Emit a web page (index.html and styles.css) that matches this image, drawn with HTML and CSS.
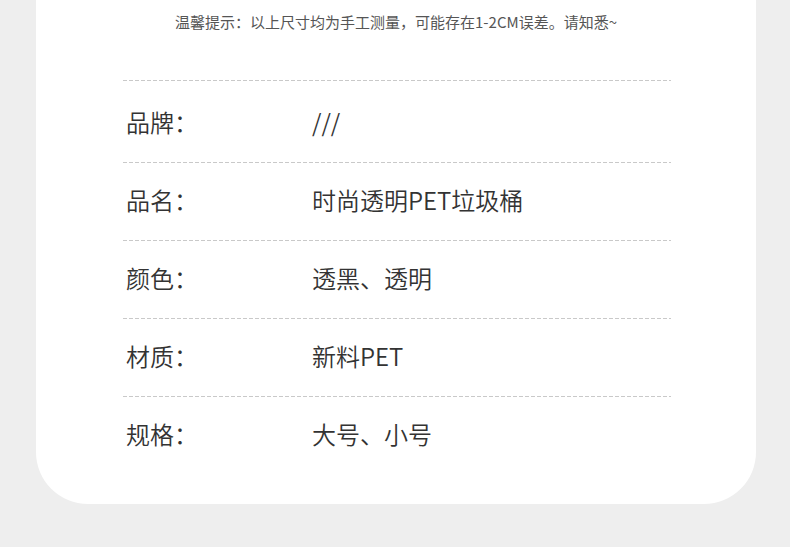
FILE: index.html
```html
<!DOCTYPE html>
<html lang="zh-CN">
<head>
<meta charset="utf-8">
<link rel="stylesheet" href="styles.css">
</head>
<body>
<div class="card">
  <p class="hint">温馨提示：以上尺寸均为手工测量，可能存在1-2CM误差。请知悉~</p>
  <div class="specs">
    <div class="row first"><span class="label">品牌：</span><span class="value">///</span></div>
    <div class="row"><span class="label">品名：</span><span class="value">时尚透明PET垃圾桶</span></div>
    <div class="row"><span class="label">颜色：</span><span class="value">透黑、透明</span></div>
    <div class="row"><span class="label">材质：</span><span class="value">新料PET</span></div>
    <div class="row"><span class="label">规格：</span><span class="value">大号、小号</span></div>
  </div>
</div>
</body>
</html>
```
FILE: styles.css
```css
html, body {
  margin: 0;
  padding: 0;
  background: #eeeeee;
}
body {
  font-family: "Noto Sans CJK SC", "Noto Sans", sans-serif;
  font-weight: 350;
  color: #333333;
}
.card {
  width: 720px;
  margin-left: 36px;
  background: #ffffff;
  border-radius: 0 0 52px 52px;
  padding: 12px 0 30px;
  box-sizing: border-box;
  height: 504px;
}
.hint {
  margin: 0;
  text-align: center;
  font-size: 15px;
  line-height: 20px;
  color: #555555;
  font-weight: 400;
}
.specs {
  margin: 48px 0 0 87px;
  width: 548px;
}
.row {
  height: 78px;
  display: flex;
  align-items: center;
  background-image: repeating-linear-gradient(to right, #c9c9c9 0 4px, transparent 4px 6px);
  background-size: 100% 1px;
  background-repeat: no-repeat;
  background-position: 0 0;
  font-size: 24px;
  padding-left: 3px;
  padding-bottom: 4px;
  box-sizing: border-box;
}
.row.first {
  height: 82px;
  padding-top: 4px;
}
.label {
  width: 186px;
  flex: none;
}
.value {
  flex: 1;
}
```
